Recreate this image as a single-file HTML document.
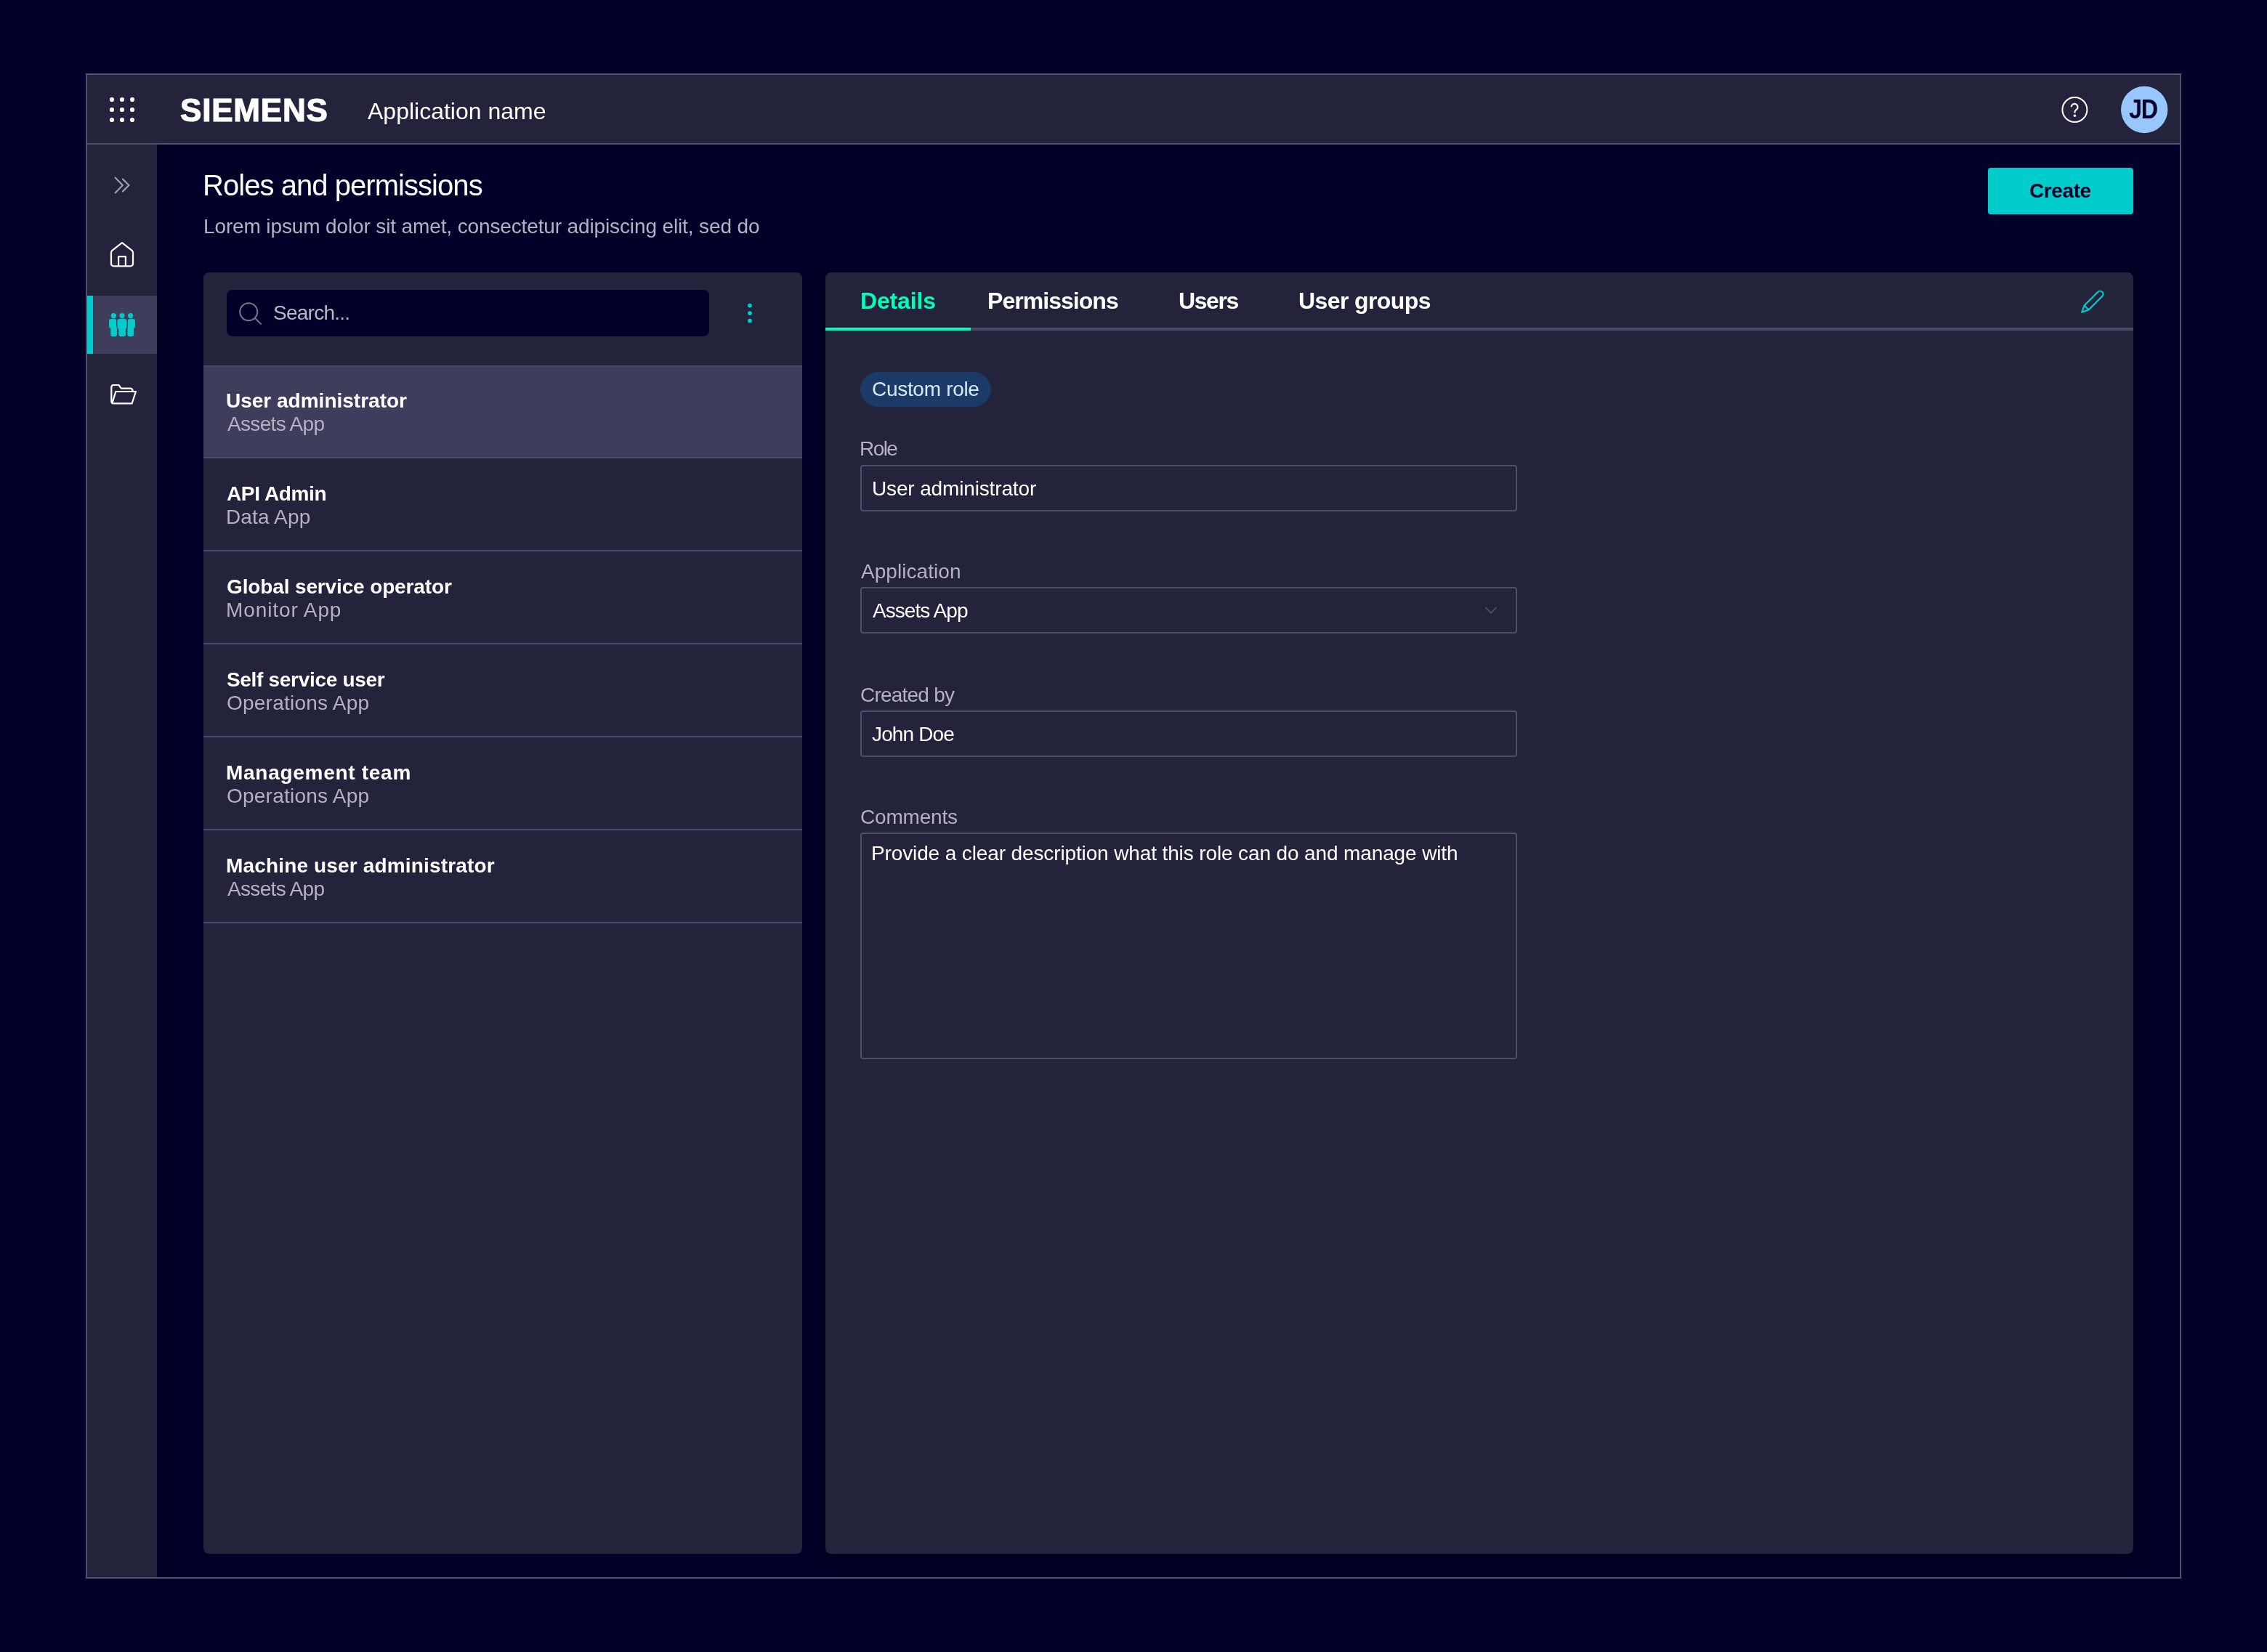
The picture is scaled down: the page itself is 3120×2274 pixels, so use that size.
<!DOCTYPE html>
<html><head><meta charset="utf-8"><title>Roles and permissions</title>
<style>
html,body{margin:0;padding:0;width:3120px;height:2274px;overflow:hidden;background:#000028;}
*{box-sizing:border-box}
.r{position:absolute}
.t{position:absolute;line-height:1;white-space:nowrap;font-family:"Liberation Sans",sans-serif;will-change:transform}
</style></head><body>
<div class="r" style="left:118px;top:101px;width:2884px;height:2072px;border:2px solid #50506d;background:#000028"></div>
<div class="r" style="left:120px;top:199px;width:96px;height:1972px;background:#23233c;box-shadow:2px 0 8px rgba(0,0,0,0.35);clip-path:inset(0 -30px 0 0)"></div>
<div class="r" style="left:120px;top:103px;width:2880px;height:94px;background:#23233c;"></div>
<div class="r" style="left:120px;top:197px;width:2880px;height:2px;background:#50506d;"></div>
<div class="r" style="left:120px;top:407px;width:96px;height:80px;background:#3f3d5c;"></div>
<div class="r" style="left:120px;top:407px;width:8px;height:80px;background:#00cccc;"></div>
<div class="r" style="left:2736px;top:231px;width:200px;height:64px;background:#00cccc;border-radius:4px"></div>
<div class="r" style="left:280px;top:375px;width:824px;height:1764px;background:#23233c;border-radius:8px;overflow:hidden"></div>
<div class="r" style="left:312px;top:399px;width:664px;height:64px;background:#000028;border-radius:8px"></div>
<div class="r" style="left:280px;top:503px;width:824px;height:126px;background:#3f3d5c;"></div>
<div class="r" style="left:280px;top:503px;width:824px;height:2px;background:#4b4a68;"></div>
<div class="r" style="left:280px;top:629px;width:824px;height:2px;background:#4b4a68;"></div>
<div class="r" style="left:280px;top:757px;width:824px;height:2px;background:#4b4a68;"></div>
<div class="r" style="left:280px;top:885px;width:824px;height:2px;background:#4b4a68;"></div>
<div class="r" style="left:280px;top:1013px;width:824px;height:2px;background:#4b4a68;"></div>
<div class="r" style="left:280px;top:1141px;width:824px;height:2px;background:#4b4a68;"></div>
<div class="r" style="left:280px;top:1269px;width:824px;height:2px;background:#4b4a68;"></div>
<div class="r" style="left:1136px;top:375px;width:1800px;height:1764px;background:#23233c;border-radius:8px;box-shadow:0 4px 16px rgba(0,0,0,0.5)"></div>
<div class="r" style="left:1136px;top:451px;width:1800px;height:4px;background:#4b4a66;"></div>
<div class="r" style="left:1136px;top:451px;width:200px;height:4px;background:#00ffb9;"></div>
<div class="r" style="left:1184px;top:512px;width:180px;height:48px;background:#1b3a66;border-radius:24px"></div>
<div class="r" style="left:1184px;top:640px;width:904px;height:64px;border:2px solid #4f4f6b;border-radius:4px"></div>
<div class="r" style="left:1184px;top:808px;width:904px;height:64px;border:2px solid #4f4f6b;border-radius:4px"></div>
<div class="r" style="left:1184px;top:978px;width:904px;height:64px;border:2px solid #4f4f6b;border-radius:4px"></div>
<div class="r" style="left:1184px;top:1146px;width:904px;height:312px;border:2px solid #4f4f6b;border-radius:4px"></div>

<svg class="r" style="left:0;top:0" width="3120" height="2274" viewBox="0 0 3120 2274">
 <g fill="#ffffff">
  <circle cx="154" cy="137" r="3.1"/><circle cx="168" cy="137" r="3.1"/><circle cx="182" cy="137" r="3.1"/>
  <circle cx="154" cy="151" r="3.1"/><circle cx="168" cy="151" r="3.1"/><circle cx="182" cy="151" r="3.1"/>
  <circle cx="154" cy="165" r="3.1"/><circle cx="168" cy="165" r="3.1"/><circle cx="182" cy="165" r="3.1"/>
 </g>
 <!-- help -->
 <circle cx="2855.4" cy="151" r="17" fill="none" stroke="#ffffff" stroke-width="2"/>
 <path d="M2850.7,147.3 A4.4,4.4 0 1 1 2858.2,150.4 L2856.6,151.7 Q2855.5,152.6 2855.5,154 V155.6" fill="none" stroke="#ffffff" stroke-width="2.1" stroke-linecap="butt"/>
 <circle cx="2855.4" cy="159.3" r="1.7" fill="#ffffff"/>
 <!-- avatar -->
 <circle cx="2951.2" cy="151" r="32.2" fill="#97c7fe"/>
 <!-- chevrons -->
 <g fill="none" stroke="#9d9db0" stroke-width="2.2" stroke-linecap="round" stroke-linejoin="miter">
  <polyline points="158.6,244.6 168.8,255 158.6,265.4"/>
  <polyline points="169,246.6 177.4,255 169,263.4"/>
 </g>
 <!-- home -->
 <g fill="none" stroke="#ffffff" stroke-width="2.2" stroke-linejoin="round">
  <path d="M168,334.2 L154.3,344.8 Q153,345.9 153,347.6 V362.6 Q153,366.4 156.8,366.4 H179.2 Q183,366.4 183,362.6 V347.6 Q183,345.9 181.7,344.8 Z"/>
  <path d="M163.1,366.4 V353.2 H172.9 V366.4"/>
 </g>
 <!-- users -->
 <g fill="#00cccc">
  <circle cx="156.4" cy="434.6" r="3.6"/><circle cx="168" cy="434.6" r="3.6"/><circle cx="179.6" cy="434.6" r="3.6"/>
  <rect x="150" y="439" width="10.4" height="13" rx="3"/><rect x="152.3" y="448" width="8.7" height="15.2" rx="3"/>
  <rect x="175.6" y="439" width="10.4" height="13" rx="3"/><rect x="175.4" y="448" width="8.7" height="15.2" rx="3"/>
  <g stroke="#3f3d5c" stroke-width="2.2">
   <rect x="161.5" y="439" width="13" height="13" rx="3"/><rect x="163.4" y="448" width="9.6" height="15.2" rx="3"/>
  </g>
  <rect x="161.5" y="439" width="13" height="13" rx="3"/><rect x="163.4" y="448" width="9.6" height="15.2" rx="3"/>
  <rect x="162.6" y="446" width="10.8" height="7" />
 </g>
 <!-- folder -->
 <g fill="none" stroke="#ffffff" stroke-width="2.2" stroke-linejoin="round">
  <path d="M182.6,538.6 Q182.6,534.6 179,534.6 H166.8 L163.4,530 H156.6 Q153.3,530 153.3,533.3 V552.3 Q153.3,555.4 156.4,555.4 H181.6 L186.9,539 H159.3 L154.6,554.4"/>
 </g>
 <!-- search icon -->
 <g fill="none" stroke="#76768f" stroke-width="2">
  <circle cx="342.2" cy="429.2" r="12"/>
  <line x1="350.8" y1="437.8" x2="359.6" y2="446.6"/>
 </g>
 <!-- kebab -->
 <g fill="#00cccc"><circle cx="1032" cy="420.6" r="2.9"/><circle cx="1032" cy="431.1" r="2.9"/><circle cx="1032" cy="441.6" r="2.9"/></g>
 <!-- pencil -->
 <g transform="translate(2865.2,429.8) rotate(-45)" fill="none" stroke="#00cccc" stroke-width="2.2" stroke-linejoin="round">
  <path d="M0,0 L9,-4.2 H35.5 A4.2,4.2 0 0 1 35.5,4.2 H9 Z M9,-4.2 V4.2"/>
 </g>
 <!-- dropdown chevron -->
 <polyline points="2044.3,836.1 2051.9,843.7 2059.5,836.1" fill="none" stroke="#4f4f6b" stroke-width="2"/>
</svg>

<div class="t" style="left:506.0px;top:136.5px;font-size:32px;font-weight:400;letter-spacing:0.0px;color:#ffffff">Application name</div>
<div class="t" style="left:247.6px;top:129.9px;font-size:44px;font-weight:700;letter-spacing:0.8px;color:#ffffff;-webkit-text-stroke:1.2px #ffffff">SIEMENS</div>
<div class="t" style="left:279.3px;top:235.1px;font-size:40px;font-weight:400;letter-spacing:-0.95px;color:#ffffff">Roles and permissions</div>
<div class="t" style="left:280.0px;top:297.8px;font-size:28px;font-weight:400;letter-spacing:-0.129px;color:#b2b2c2">Lorem ipsum dolor sit amet, consectetur adipiscing elit, sed do</div>
<div class="t" style="left:2793.0px;top:249.0px;font-size:28px;font-weight:700;letter-spacing:-0.4px;color:#000028">Create</div>
<div class="t" style="left:376.3px;top:417.4px;font-size:28px;font-weight:400;letter-spacing:-0.75px;color:#b9b9c6">Search...</div>
<div class="t" style="left:310.7px;top:537.7px;font-size:28px;font-weight:700;letter-spacing:0.0px;color:#ffffff">User administrator</div>
<div class="t" style="left:312.7px;top:569.6px;font-size:28px;font-weight:400;letter-spacing:-0.667px;color:#b2b2c2">Assets App</div>
<div class="t" style="left:311.7px;top:665.7px;font-size:28px;font-weight:700;letter-spacing:-0.375px;color:#ffffff">API Admin</div>
<div class="t" style="left:310.7px;top:697.6px;font-size:28px;font-weight:400;letter-spacing:0.143px;color:#b2b2c2">Data App</div>
<div class="t" style="left:311.7px;top:793.7px;font-size:28px;font-weight:700;letter-spacing:-0.136px;color:#ffffff">Global service operator</div>
<div class="t" style="left:310.7px;top:825.6px;font-size:28px;font-weight:400;letter-spacing:0.9px;color:#b2b2c2">Monitor App</div>
<div class="t" style="left:311.7px;top:921.7px;font-size:28px;font-weight:700;letter-spacing:-0.312px;color:#ffffff">Self service user</div>
<div class="t" style="left:311.7px;top:953.6px;font-size:28px;font-weight:400;letter-spacing:0.231px;color:#b2b2c2">Operations App</div>
<div class="t" style="left:310.7px;top:1049.7px;font-size:28px;font-weight:700;letter-spacing:0.714px;color:#ffffff">Management team</div>
<div class="t" style="left:311.7px;top:1081.6px;font-size:28px;font-weight:400;letter-spacing:0.231px;color:#b2b2c2">Operations App</div>
<div class="t" style="left:310.7px;top:1177.7px;font-size:28px;font-weight:700;letter-spacing:0.16px;color:#ffffff">Machine user administrator</div>
<div class="t" style="left:312.7px;top:1209.6px;font-size:28px;font-weight:400;letter-spacing:-0.667px;color:#b2b2c2">Assets App</div>
<div class="t" style="left:1183.6px;top:398.2px;font-size:32px;font-weight:700;letter-spacing:-0.167px;color:#00ffb9">Details</div>
<div class="t" style="left:1359.4px;top:398.2px;font-size:32px;font-weight:700;letter-spacing:-0.96px;color:#ffffff">Permissions</div>
<div class="t" style="left:1622.0px;top:398.2px;font-size:32px;font-weight:700;letter-spacing:-1.4px;color:#ffffff">Users</div>
<div class="t" style="left:1787.0px;top:398.2px;font-size:32px;font-weight:700;letter-spacing:-0.6px;color:#ffffff">User groups</div>
<div class="t" style="left:1200.0px;top:522.3px;font-size:28px;font-weight:400;letter-spacing:-0.3px;color:#d8e8ff">Custom role</div>
<div class="t" style="left:1183.4px;top:604.3px;font-size:28px;font-weight:400;letter-spacing:-1.567px;color:#b2b2c2">Role</div>
<div class="t" style="left:1185.0px;top:772.7px;font-size:28px;font-weight:400;letter-spacing:0.05px;color:#b2b2c2">Application</div>
<div class="t" style="left:1184.0px;top:942.7px;font-size:28px;font-weight:400;letter-spacing:-0.778px;color:#b2b2c2">Created by</div>
<div class="t" style="left:1184.0px;top:1110.6px;font-size:28px;font-weight:400;letter-spacing:-0.2px;color:#b2b2c2">Comments</div>
<div class="t" style="left:1199.5px;top:658.8px;font-size:28px;font-weight:400;letter-spacing:-0.147px;color:#ffffff">User administrator</div>
<div class="t" style="left:1200.6px;top:827.1px;font-size:28px;font-weight:400;letter-spacing:-0.956px;color:#ffffff">Assets App</div>
<div class="t" style="left:1200.3px;top:997.1px;font-size:28px;font-weight:400;letter-spacing:-0.857px;color:#ffffff">John Doe</div>
<div class="t" style="left:1199.0px;top:1160.9px;font-size:28px;font-weight:400;letter-spacing:-0.125px;color:#ffffff">Provide a clear description what this role can do and manage with</div>
<div class="t" style="left:2930px;top:132.6px;font-size:36px;font-weight:700;letter-spacing:-1.5px;color:#000028;transform:scaleX(0.9);transform-origin:0 0">JD</div>
</body></html>
